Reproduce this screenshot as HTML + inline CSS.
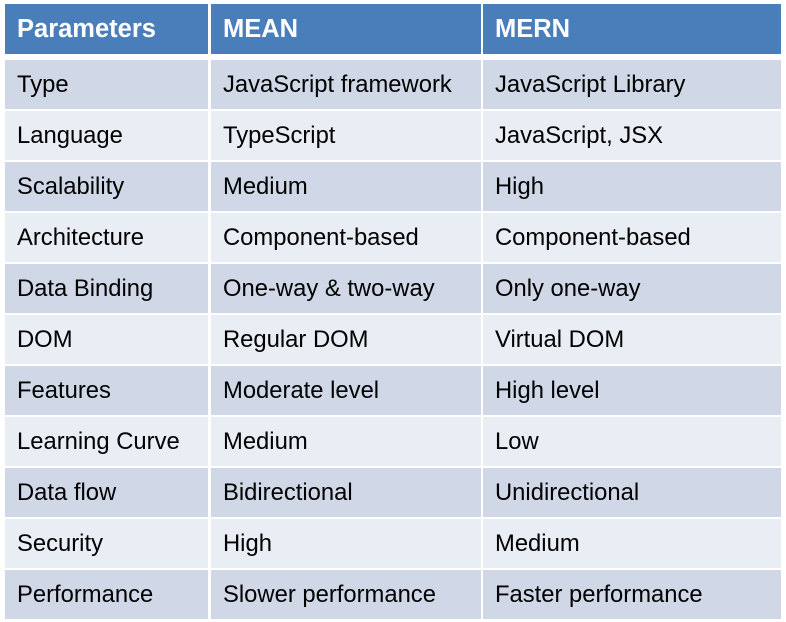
<!DOCTYPE html>
<html><head><meta charset="utf-8"><style>
body{margin:0;width:786px;height:622px;background:#fff;position:relative;overflow:hidden;font-family:"Liberation Sans",sans-serif}
.c{position:absolute;box-sizing:border-box;padding-left:12px;display:flex;align-items:center;font-size:23.8px;color:#000;white-space:nowrap}
.h{background:#4a7ebb;color:#fff;font-weight:bold;font-size:25.5px}
.o{background:#d0d8e8}.e{background:#e9edf4}
</style></head><body>
<div id="t"></div>
<script>
var d=[["Parameters","MEAN","MERN"],["Type","JavaScript framework","JavaScript Library"],["Language","TypeScript","JavaScript, JSX"],["Scalability","Medium","High"],["Architecture","Component-based","Component-based"],["Data Binding","One-way & two-way","Only one-way"],["DOM","Regular DOM","Virtual DOM"],["Features","Moderate level","High level"],["Learning Curve","Medium","Low"],["Data flow","Bidirectional","Unidirectional"],["Security","High","Medium"],["Performance","Slower performance","Faster performance"]];
var xs=[[5,203],[211,270],[483,298]];var h="";
d.forEach(function(r,i){var top=i==0?4:60+51*(i-1),ht=i==0?50:49,cl=i==0?"h":(i%2?"o":"e");
r.forEach(function(t,j){h+='<div class="c '+cl+'" style="left:'+xs[j][0]+'px;top:'+top+'px;width:'+xs[j][1]+'px;height:'+ht+'px">'+t.replace("&","&amp;")+'</div>';});});
document.getElementById("t").innerHTML=h;
</script>
</body></html>
